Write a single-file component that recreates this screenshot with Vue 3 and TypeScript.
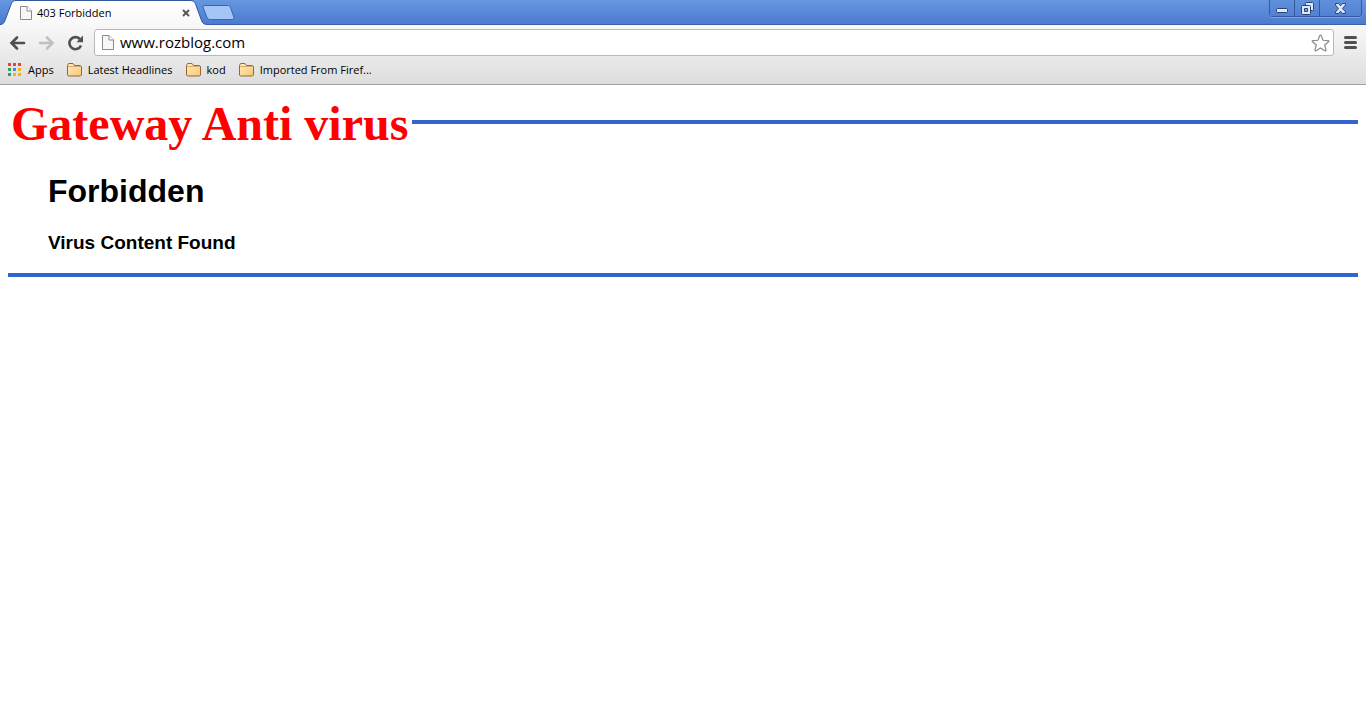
<script setup lang="ts">
import { ref } from 'vue'

interface Bookmark {
  label: string
}

const address = ref<string>('www.rozblog.com')
const bookmarks: Bookmark[] = [
  { label: 'Latest Headlines' },
  { label: 'kod' },
  { label: 'Imported From Firef...' },
]
const appColors: string[] = [
  '#ea4335', '#ea4335', '#ea4335',
  '#2fa25a', '#3b8bea', '#f4b400',
  '#2fa25a', '#f4b400', '#f4b400',
]
</script>

<template>
  <div class="browser">
    <header class="titlebar">
      <div class="tab">
        <svg class="tab-shape" width="208" height="25" viewBox="0 0 208 25" aria-hidden="true">
          <defs>
            <linearGradient id="tabFill" x1="0" y1="0" x2="0" y2="1">
              <stop offset="0" stop-color="#ffffff" />
              <stop offset="1" stop-color="#f8f8f8" />
            </linearGradient>
          </defs>
          <path d="M0 25V24.500C3 24.500 4 23 5 20.500L11 4.500C12.300 1.500 13.500.500 16 .500H190C193 .500 194.500 1.500 195.700 4.500L201.500 20.500C202.500 23.500 204 24.500 208 24.500V25Z" fill="url(#tabFill)" />
          <path d="M0 24.500C3 24.500 4 23 5 20.500L11 4.500C12.300 1.500 13.500.500 16 .500H190C193 .500 194.500 1.500 195.700 4.500L201.500 20.500C202.500 23.500 204 24.500 208 24.500" fill="none" stroke="#34569c" />
        </svg>
        <svg class="page-icon" width="12" height="14" viewBox="0 0 12 14" aria-hidden="true">
          <path d="M.5.500H7L11.500 5V13.500H.5Z" fill="#f7f7f7" stroke="#8b8b8b" />
          <path d="M7 .5V5H11.500" fill="#fff" stroke="#8b8b8b" />
        </svg>
        <span class="tab-title">403 Forbidden</span>
        <button class="tab-close" type="button" aria-label="Close tab">
          <svg width="8" height="8" viewBox="0 0 8 8"><path d="M1 1L7 7M7 1L1 7" stroke="#555" stroke-width="1.900" /></svg>
        </button>
      </div>
      <button class="new-tab" type="button" aria-label="New tab">
        <svg width="33" height="17" viewBox="0 0 33 17">
          <path d="M3 1.500H25C27 1.500 28 2 28.700 4L31.800 13C32.300 15 31.800 15.500 30 15.500H8.500C6.500 15.500 5.500 15 4.800 13L1.300 4C.7 2.200 1.200 1.500 3 1.500Z" fill="#a4c6f6" stroke="#3c65b2" />
        </svg>
      </button>
      <div class="window-buttons">
        <button class="minimize" type="button" aria-label="Minimize">
          <svg width="12" height="5" viewBox="0 0 12 5"><rect x=".5" y=".5" width="11" height="4" rx="1" fill="#dce8fb" stroke="#2a4374" /></svg>
        </button>
        <button class="restore" type="button" aria-label="Restore">
          <svg width="13" height="13" viewBox="0 0 13 13" fill="none">
            <rect x="4.500" y=".5" width="8" height="8" rx="1" fill="#dce8fb" stroke="#2a4374" />
            <rect x=".5" y="3.500" width="9" height="9" rx="1" fill="#dce8fb" stroke="#2a4374" />
            <path d="M3.500 6.500H6.500V9.500H3.500Z" fill="#7ea3e2" stroke="#2a4374" />
          </svg>
        </button>
        <button class="close" type="button" aria-label="Close">
          <svg width="13" height="11" viewBox="0 0 13 11"><path d="M1.500.500H4.500L6.500 2.800L8.500.500H11.500V2L8.500 5.500L11.500 9V10.500H8.500L6.500 8.200L4.500 10.500H1.500V9L4.500 5.500L1.500 2Z" fill="#dce8fb" stroke="#2a4374" /></svg>
        </button>
      </div>
    </header>

    <div class="chrome">
      <div class="toolbar">
        <button class="nav" type="button" aria-label="Back">
          <svg width="17" height="14" viewBox="0 0 17 14"><path d="M8 1.500L2.500 7L8 12.500M3 7H15" fill="none" stroke="#505050" stroke-width="2.600" stroke-linecap="round" stroke-linejoin="miter" /></svg>
        </button>
        <button class="nav" type="button" aria-label="Forward">
          <svg width="17" height="14" viewBox="0 0 17 14"><path d="M9 1.500L14.500 7L9 12.500M14 7H2" fill="none" stroke="#c0c0c0" stroke-width="2.600" stroke-linecap="round" /></svg>
        </button>
        <button class="nav" type="button" aria-label="Reload">
          <svg width="17" height="16" viewBox="0 0 17 16">
            <path d="M14 10.500A6 6 0 1 1 12.800 4" fill="none" stroke="#505050" stroke-width="2.600" />
            <path d="M16 .600V7.200H9.400Z" fill="#505050" />
          </svg>
        </button>
        <div class="omnibox">
          <svg class="site-icon" width="12" height="15" viewBox="0 0 12 15" aria-hidden="true">
            <path d="M.5.500H7L11.500 5V14.500H.5Z" fill="#f7f7f7" stroke="#8b8b8b" />
            <path d="M7 .5V5H11.500" fill="#fff" stroke="#8b8b8b" />
          </svg>
          <input v-model="address" class="address" type="text" aria-label="Address" spellcheck="false" />
          <button class="star" type="button" aria-label="Bookmark this page">
            <svg width="19" height="18" viewBox="0 0 19 18"><path d="M9.500 1Q10 1 10.300 1.700L12.100 6.300L17 6.700Q18.500 6.900 17.500 7.800L13.700 11L15 15.800Q15.200 17.400 13.900 16.700L9.500 14L5.100 16.700Q3.800 17.400 4 15.800L5.300 11L1.500 7.800Q.5 6.900 2 6.700L6.900 6.300L8.700 1.700Q9 1 9.500 1Z" fill="#fff" stroke="#8a8a8a" stroke-width="1.200" /></svg>
          </button>
        </div>
        <button class="menu" type="button" aria-label="Menu">
          <svg width="13" height="13" viewBox="0 0 13 13"><path d="M1.500 1.500H11.500M1.500 6.500H11.500M1.500 11.500H11.500" stroke="#505050" stroke-width="3" stroke-linecap="round" /></svg>
        </button>
      </div>

      <nav class="bookmarks" aria-label="Bookmarks">
        <button class="bookmark" type="button">
          <svg width="14" height="14" viewBox="0 0 14 14" aria-hidden="true">
            <rect v-for="(color, i) in appColors" :key="i" :x="(i % 3) * 5" :y="Math.floor(i / 3) * 5" width="3" height="3" :fill="color" />
          </svg>
          <span>Apps</span>
        </button>
        <button v-for="item in bookmarks" :key="item.label" class="bookmark" type="button">
          <svg width="15" height="14" viewBox="0 0 15 14" aria-hidden="true">
            <defs>
              <linearGradient id="folderFill" x1="0" y1="0" x2="1" y2="1">
                <stop offset="0" stop-color="#ffedbd" />
                <stop offset="1" stop-color="#f8c673" />
              </linearGradient>
            </defs>
            <path d="M.5 12V2.500L1.500.500H6L7.500 2.500H13.500L14.500 3.500V12L13.500 13H1.500Z" fill="url(#folderFill)" stroke="#90683a" />
            <path d="M1 3.500H14" fill="none" stroke="#d9ae6c" />
          </svg>
          <span>{{ item.label }}</span>
        </button>
      </nav>
    </div>

    <main class="page">
      <div class="banner">
        <h1 class="vendor">Gateway Anti virus</h1>
        <hr class="rule" />
      </div>
      <section class="message">
        <h2>Forbidden</h2>
        <h3>Virus Content Found</h3>
      </section>
      <hr class="rule" />
    </main>
  </div>
</template>

<style>
body {
  margin: 0;
  background: #fff;
}
</style>

<style scoped>
.browser {
  min-height: 100vh;
  background: #fff;
  color: #000;
  font-family: "Open Sans", "Noto Sans", sans-serif;
}

button {
  display: flex;
  align-items: center;
  justify-content: center;
  margin: 0;
  padding: 0;
  border: 0;
  background: none;
  color: inherit;
  font: inherit;
}

svg {
  display: block;
  flex: none;
}

.titlebar {
  display: flex;
  align-items: flex-start;
  height: 25px;
  background: linear-gradient(#6697e0, #4b79d0);
  box-shadow: inset 0 -1px #3c62ad;
}

.tab {
  position: relative;
  display: flex;
  align-items: center;
  box-sizing: border-box;
  width: 202px;
  height: 25px;
  padding: 0 11px 0 20px;
}

.tab-shape {
  position: absolute;
  top: 0;
  left: 0;
}

.page-icon,
.tab-title,
.tab-close {
  position: relative;
}

.tab-title {
  flex: 1;
  margin-left: 5px;
  font-size: 11px;
  line-height: 24px;
}

.tab-close {
  width: 10px;
  height: 10px;
}

.new-tab {
  margin-top: 4px;
}

.window-buttons {
  display: flex;
  margin: 0 4px 0 auto;
  border: 1px solid #35599e;
  border-top: 0;
  border-radius: 0 0 4px 4px;
  box-shadow: 0 1px #7ba3e6;
}

.window-buttons button {
  height: 16px;
  background: linear-gradient(#6090dc, #5281d2);
}

.window-buttons button + button {
  border-left: 1px solid #35599e;
}

.minimize {
  width: 24px;
  padding-top: 4px;
}

.restore {
  width: 25px;
}

.close {
  width: 42px;
  border-radius: 0 0 3px 0;
}

.chrome {
  border-bottom: 1px solid #a3a3a3;
  background: linear-gradient(#f8f8f8, #dddddd);
}

.toolbar {
  display: flex;
  align-items: center;
  height: 35px;
  padding: 0 9px;
}

.nav {
  width: 17px;
  height: 24px;
  margin-right: 12px;
}

.nav:nth-child(3) {
  margin-right: 10px;
}

.omnibox {
  display: flex;
  flex: 1;
  align-items: center;
  box-sizing: border-box;
  height: 27px;
  padding: 0 3px 0 7px;
  border: 1px solid #b8b8b8;
  border-radius: 3px;
  background: #fff;
}

.address {
  flex: 1;
  min-width: 0;
  margin: 0 0 0 6px;
  padding: 0 0 2px;
  border: 0;
  outline: 0;
  background: transparent;
  color: #000;
  font-family: inherit;
  font-size: 15px;
  line-height: 22px;
}

.menu {
  margin-left: 10px;
}

.bookmarks {
  display: flex;
  align-items: center;
  gap: 13px;
  height: 24px;
  padding: 0 8px;
  font-size: 11px;
}

.bookmark {
  gap: 6px;
  height: 20px;
  line-height: 20px;
  margin-bottom: 4px;
}

.page {
  padding: 8px;
}

.banner {
  display: flex;
  align-items: center;
}

.vendor {
  margin: 0;
  padding: 4px 4px 0 3px;
  color: #f00;
  font: bold 48px/54px "Liberation Serif", "Times New Roman", serif;
}

.rule {
  height: 4px;
  margin: 0;
  border: 0;
  background: #3366cc;
}

.banner .rule {
  flex: 1;
}

.message {
  padding: 22px 40px 19px;
  font-family: "Liberation Sans", Arial, sans-serif;
}

h2 {
  margin: 0;
  font-size: 32px;
  line-height: 36px;
}

h3 {
  margin: 23px 0 0;
  font-size: 19px;
  line-height: 22px;
}
</style>
